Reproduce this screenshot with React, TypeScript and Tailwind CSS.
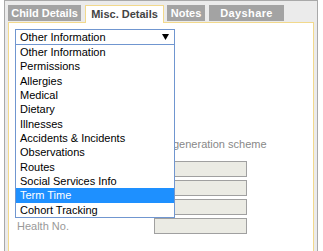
import React from "react"

const options = [
  "Other Information",
  "Permissions",
  "Allergies",
  "Medical",
  "Dietary",
  "Illnesses",
  "Accidents & Incidents",
  "Observations",
  "Routes",
  "Social Services Info",
  "Term Time",
  "Cohort Tracking",
]

// labels of the first rows sit under the open list, so only the last one shows
const fields = ["", "", "", "Health No."]

export default function App() {
  return (
    <div className="min-h-[251px] bg-white pl-[4px] font-['Liberation_Sans',Arial,sans-serif] text-[11px]">
      <div className="w-[314px] min-h-[251px] border-t border-l border-r border-[#a9a9a9] bg-[#ebebeb] flex flex-col">
        {/* Tabs */}
        <div className="flex items-end pl-[3px] pt-[4px]">
          <div className="w-[73px] h-[16px] mb-px bg-[#a3a3a3] text-white font-bold flex items-center justify-center">
            Child Details
          </div>
          <div className="relative z-10 ml-[4px] w-[79px] h-[18px] -mb-px bg-white border-t border-l border-r border-[#f2d98c] text-[#444] font-bold flex items-center justify-center pb-px">
            Misc. Details
          </div>
          <div className="ml-[3px] w-[38px] h-[16px] mb-px bg-[#a3a3a3] text-white font-bold flex items-center justify-center">
            Notes
          </div>
          <div className="ml-[4px] w-[75px] h-[16px] mb-px bg-[#a3a3a3] text-white font-bold tracking-[0.4px] flex items-center justify-center">
            Dayshare
          </div>
        </div>

        {/* Panel */}
        <div className="ml-[3px] mr-[3px] flex-1 bg-white border border-b-0 border-[#f2d98c] pl-[6px] pt-[6px]">
          <div className="relative w-[160px]">
            <div className="h-[16px] border border-[#7096d0] bg-white flex items-center justify-between pl-[4px] pr-[5px] text-black">
              <span>Other Information</span>
              <svg width="7" height="6" viewBox="0 0 7 6">
                <polygon points="0,0 7,0 3.5,6" fill="#000" />
              </svg>
            </div>
            {/* Open list */}
            <div className="absolute left-0 top-[16px] z-20 w-[160px] bg-white border-l border-r border-b border-[#7096d0]">
              {options.map((o) => (
                <div
                  key={o}
                  className={
                    o === "Term Time"
                      ? "h-[14.33px] flex items-center pl-[4px] bg-[#1e90ff] text-white"
                      : "h-[14.33px] flex items-center pl-[4px] text-black"
                  }
                >
                  {o}
                </div>
              ))}
            </div>
          </div>

          {/* Form behind the list */}
          <div className="mt-[91px] flex flex-col">
            <div className="h-[16px] pl-[158px] flex items-center text-[#888]">
              generation scheme
            </div>
            <div className="mt-[9px] flex flex-col gap-[3px]">
              {fields.map((f, i) => (
                <div key={i} className="flex items-center h-[16px]">
                  <div className="w-[139px] pl-[2px] text-[#999]">{f}</div>
                  <div className="w-[93px] h-[16px] border border-[#a0a0a0] bg-[#ebebe4]" />
                </div>
              ))}
            </div>
          </div>
        </div>
      </div>
    </div>
  )
}
